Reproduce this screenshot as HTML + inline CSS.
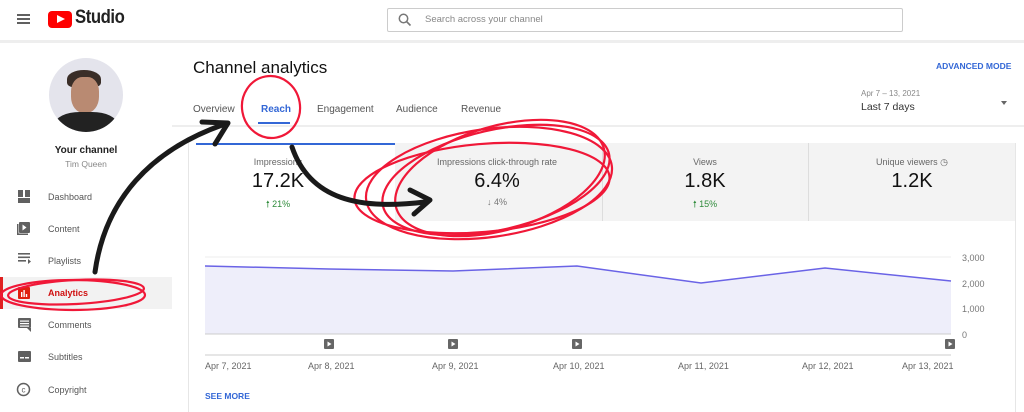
<!DOCTYPE html>
<html><head><style>
*{margin:0;padding:0;box-sizing:border-box}
body{width:1024px;height:412px;overflow:hidden;background:#fff;font-family:"Liberation Sans",Arial,sans-serif;position:relative;color:#0d0d0d}
.a{position:absolute;white-space:nowrap}
.nav{font-size:9px;color:#555}
.tab{font-size:10px;color:#555;top:104px}
.lbl{font-size:9px;color:#666;text-align:center;width:200px}
.val{font-size:20px;color:#111;text-align:center;width:200px}
.chg{font-size:9px;text-align:center;width:200px}
.d{font-size:9px;color:#666;top:361px}
.y{font-size:9px;color:#777;left:962px}
</style></head><body>
<!-- header -->
<div class="a" style="left:0;top:40px;width:1024px;height:3px;background:#eee"></div>
<div class="a" style="left:17px;top:14px;width:13px;height:2px;background:#606060;box-shadow:0 4px 0 #606060,0 8px 0 #606060"></div>
<div class="a" style="left:48px;top:11px;width:24px;height:17px;background:#f00;border-radius:4px"></div>
<div class="a" style="left:57px;top:15px;width:0;height:0;border-left:8px solid #fff;border-top:4.5px solid transparent;border-bottom:4.5px solid transparent"></div>
<div class="a" style="left:75px;top:7px;font-size:19px;font-weight:bold;letter-spacing:-0.5px;color:#222;transform:scaleX(0.88);transform-origin:left">Studio</div>
<div class="a" style="left:387px;top:8px;width:516px;height:24px;border:1px solid #ccc;border-radius:2px"></div>
<svg class="a" style="left:398px;top:13px" width="14" height="14"><circle cx="5.5" cy="5.5" r="4.2" fill="none" stroke="#777" stroke-width="1.5"/><line x1="8.5" y1="8.5" x2="12.5" y2="12.5" stroke="#777" stroke-width="1.6"/></svg>
<div class="a" style="left:425px;top:14px;font-size:9.5px;color:#888">Search across your channel</div>
<!-- sidebar -->
<div class="a" style="left:49px;top:58px;width:74px;height:74px;border-radius:50%;background:#e4e4ec;overflow:hidden">
<div class="a" style="left:18px;top:12px;width:34px;height:18px;background:#3a2e28;border-radius:50% 50% 30% 30%"></div>
<div class="a" style="left:22px;top:19px;width:28px;height:36px;background:#b98a72;border-radius:40% 40% 45% 45%"></div>
<div class="a" style="left:6px;top:54px;width:62px;height:30px;background:#222;border-radius:40% 40% 0 0"></div>
</div>
<div class="a" style="left:0;top:145px;width:172px;text-align:center;font-size:10px;font-weight:bold;color:#222">Your channel</div>
<div class="a" style="left:0;top:159px;width:172px;text-align:center;font-size:8.5px;color:#888">Tim Queen</div>
<div class="a" style="left:0;top:277px;width:172px;height:32px;background:#f2f2f2"></div>
<div class="a" style="left:0;top:277px;width:3px;height:32px;background:#e02020"></div>
<svg class="a" style="left:0;top:0" width="40" height="412">
<g fill="#606060">
<rect x="18" y="190" width="5" height="7"/><rect x="25" y="190" width="5" height="7"/><rect x="18" y="198" width="12" height="5"/>
<rect x="19" y="222" width="11" height="11" rx="1"/><path d="M17 224v11h11v-1.5h-9.5v-9.5z"/>
<rect x="18" y="253" width="12" height="1.6"/><rect x="18" y="256.5" width="12" height="1.6"/><rect x="18" y="260" width="8" height="1.6"/><path d="M28 259v5l3-2.5z"/>
<rect x="18" y="318" width="13" height="10" rx="1"/><path d="M27 328h4v4z"/>
<rect x="18" y="351" width="13" height="11" rx="1"/>
</g>
<path d="M22.5 224.5v6l4-3z" fill="#fff"/>
<rect x="18" y="287" width="12" height="12" rx="1" fill="#e02010"/>
<g fill="#fff"><rect x="21" y="292" width="1.4" height="5"/><rect x="23.4" y="290" width="1.4" height="7"/><rect x="25.8" y="294" width="1.4" height="3"/></g>
<g fill="#fff"><rect x="20" y="320.5" width="9" height="1.2"/><rect x="20" y="323" width="9" height="1.2"/><rect x="20" y="325.5" width="9" height="1.2"/><rect x="20" y="357" width="4" height="1.5"/><rect x="25" y="357" width="4" height="1.5"/></g>
<circle cx="23.5" cy="389.5" r="6" fill="none" stroke="#606060" stroke-width="1.5"/>
<text x="23.5" y="392.5" font-size="8" fill="#606060" text-anchor="middle" font-family="Liberation Sans">c</text>
</svg>
<div class="a nav" style="left:48px;top:192px">Dashboard</div>
<div class="a nav" style="left:48px;top:224px">Content</div>
<div class="a nav" style="left:48px;top:256px">Playlists</div>
<div class="a nav" style="left:48px;top:288px;color:#d01010;font-weight:bold">Analytics</div>
<div class="a nav" style="left:48px;top:320px">Comments</div>
<div class="a nav" style="left:48px;top:352px">Subtitles</div>
<div class="a nav" style="left:48px;top:385px">Copyright</div>
<!-- main -->
<div class="a" style="left:193px;top:58px;font-size:17px;font-weight:500;color:#111">Channel analytics</div>
<div class="a" style="left:936px;top:61px;font-size:8.5px;font-weight:bold;color:#3367d6">ADVANCED MODE</div>
<div class="a" style="left:861px;top:89px;font-size:8px;color:#888">Apr 7 – 13, 2021</div>
<div class="a" style="left:861px;top:101px;font-size:10.5px;color:#333">Last 7 days</div>
<div class="a" style="left:1001px;top:101px;border-left:3.5px solid transparent;border-right:3.5px solid transparent;border-top:4px solid #666"></div>
<div class="a tab" style="left:193px">Overview</div>
<div class="a tab" style="left:261px;color:#3367d6;font-weight:bold">Reach</div>
<div class="a" style="left:258px;top:122px;width:32px;height:2px;background:#3367d6"></div>
<div class="a tab" style="left:317px">Engagement</div>
<div class="a tab" style="left:396px">Audience</div>
<div class="a tab" style="left:461px">Revenue</div>
<div class="a" style="left:172px;top:125px;width:852px;height:2px;background:#eee"></div>
<!-- cards -->
<div class="a" style="left:188px;top:143px;width:1px;height:269px;background:#e6e6e6"></div>
<div class="a" style="left:1015px;top:143px;width:1px;height:269px;background:#e6e6e6"></div>
<div class="a" style="left:196px;top:143px;width:199px;height:2px;background:#3367d6"></div>
<div class="a" style="left:395px;top:143px;width:620px;height:78px;background:#f3f3f3"></div>
<div class="a" style="left:602px;top:143px;width:1px;height:78px;background:#ddd"></div>
<div class="a" style="left:808px;top:143px;width:1px;height:78px;background:#ddd"></div>
<div class="a lbl" style="left:178px;top:157px">Impressions</div>
<div class="a val" style="left:178px;top:170px">17.2K</div>
<div class="a chg" style="left:178px;top:197px;color:#2e8b3a">🠕 21%</div>
<div class="a lbl" style="left:397px;top:157px">Impressions click-through rate</div>
<div class="a val" style="left:397px;top:170px">6.4%</div>
<div class="a chg" style="left:397px;top:197px;color:#777">↓ 4%</div>
<div class="a lbl" style="left:605px;top:157px">Views</div>
<div class="a val" style="left:605px;top:170px">1.8K</div>
<div class="a chg" style="left:605px;top:197px;color:#2e8b3a">🠕 15%</div>
<div class="a lbl" style="left:812px;top:157px">Unique viewers ◷</div>
<div class="a val" style="left:812px;top:170px">1.2K</div>
<!-- chart -->
<svg class="a" style="left:0;top:0" width="1024" height="412">
<line x1="205" y1="257" x2="951" y2="257" stroke="#eee"/>
<line x1="205" y1="283" x2="951" y2="283" stroke="#e2e2ee"/>
<line x1="205" y1="308" x2="951" y2="308" stroke="#e2e2ee"/>
<polygon points="205,266 329,269 453,271 577,266 701,283 825,268 951,281 951,334 205,334" fill="#eeeefa"/>
<polyline points="205,266 329,269 453,271 577,266 701,283 825,268 951,281" fill="none" stroke="#6a63e6" stroke-width="1.5"/>
<line x1="205" y1="334" x2="951" y2="334" stroke="#ccc"/>
<line x1="205" y1="355" x2="951" y2="355" stroke="#ddd" stroke-width="1.5"/>
<g fill="#666"><rect x="324" y="339" width="10" height="10" rx="1"/><rect x="448" y="339" width="10" height="10" rx="1"/><rect x="572" y="339" width="10" height="10" rx="1"/><rect x="945" y="339" width="10" height="10" rx="1"/></g>
<g fill="#fff"><path d="M327.5 341.5v5l4-2.5z"/><path d="M451.5 341.5v5l4-2.5z"/><path d="M575.5 341.5v5l4-2.5z"/><path d="M948.5 341.5v5l4-2.5z"/></g>
</svg>
<div class="a y" style="top:253px">3,000</div>
<div class="a y" style="top:279px">2,000</div>
<div class="a y" style="top:304px">1,000</div>
<div class="a y" style="top:330px">0</div>
<div class="a d" style="left:205px">Apr 7, 2021</div>
<div class="a d" style="left:308px">Apr 8, 2021</div>
<div class="a d" style="left:432px">Apr 9, 2021</div>
<div class="a d" style="left:553px">Apr 10, 2021</div>
<div class="a d" style="left:678px">Apr 11, 2021</div>
<div class="a d" style="left:802px">Apr 12, 2021</div>
<div class="a d" style="left:902px">Apr 13, 2021</div>
<div class="a" style="left:205px;top:391px;font-size:8.5px;font-weight:bold;color:#3367d6">SEE MORE</div>
<!-- annotations -->
<svg class="a" style="left:0;top:0" width="1024" height="412" fill="none">
<g stroke="#f01838" stroke-width="2.2">
<ellipse cx="271" cy="107" rx="29" ry="31" transform="rotate(-10 271 107)"/>
<ellipse cx="489" cy="183" rx="124" ry="54" transform="rotate(-8 489 183)"/>
<ellipse cx="496" cy="180" rx="116" ry="50" transform="rotate(-13 496 180)"/>
<ellipse cx="482" cy="188" rx="128" ry="44" transform="rotate(-5 482 188)"/>
<ellipse cx="500" cy="178" rx="108" ry="52" transform="rotate(-16 500 178)"/>
<ellipse cx="73" cy="295" rx="72" ry="15"/>
<ellipse cx="76" cy="292" rx="68" ry="12" transform="rotate(-3 76 292)"/>
</g>
<g stroke="#1a1a1a" stroke-width="5" stroke-linecap="round" stroke-linejoin="round">
<path d="M95 272 C105 200 150 150 225 124"/>
<path d="M202 122 L228 123 L215 144"/>
<path d="M292 147 C310 200 360 210 425 202"/>
<path d="M410 190 L430 200 L414 214"/>
</g>
</svg>
</body></html>
